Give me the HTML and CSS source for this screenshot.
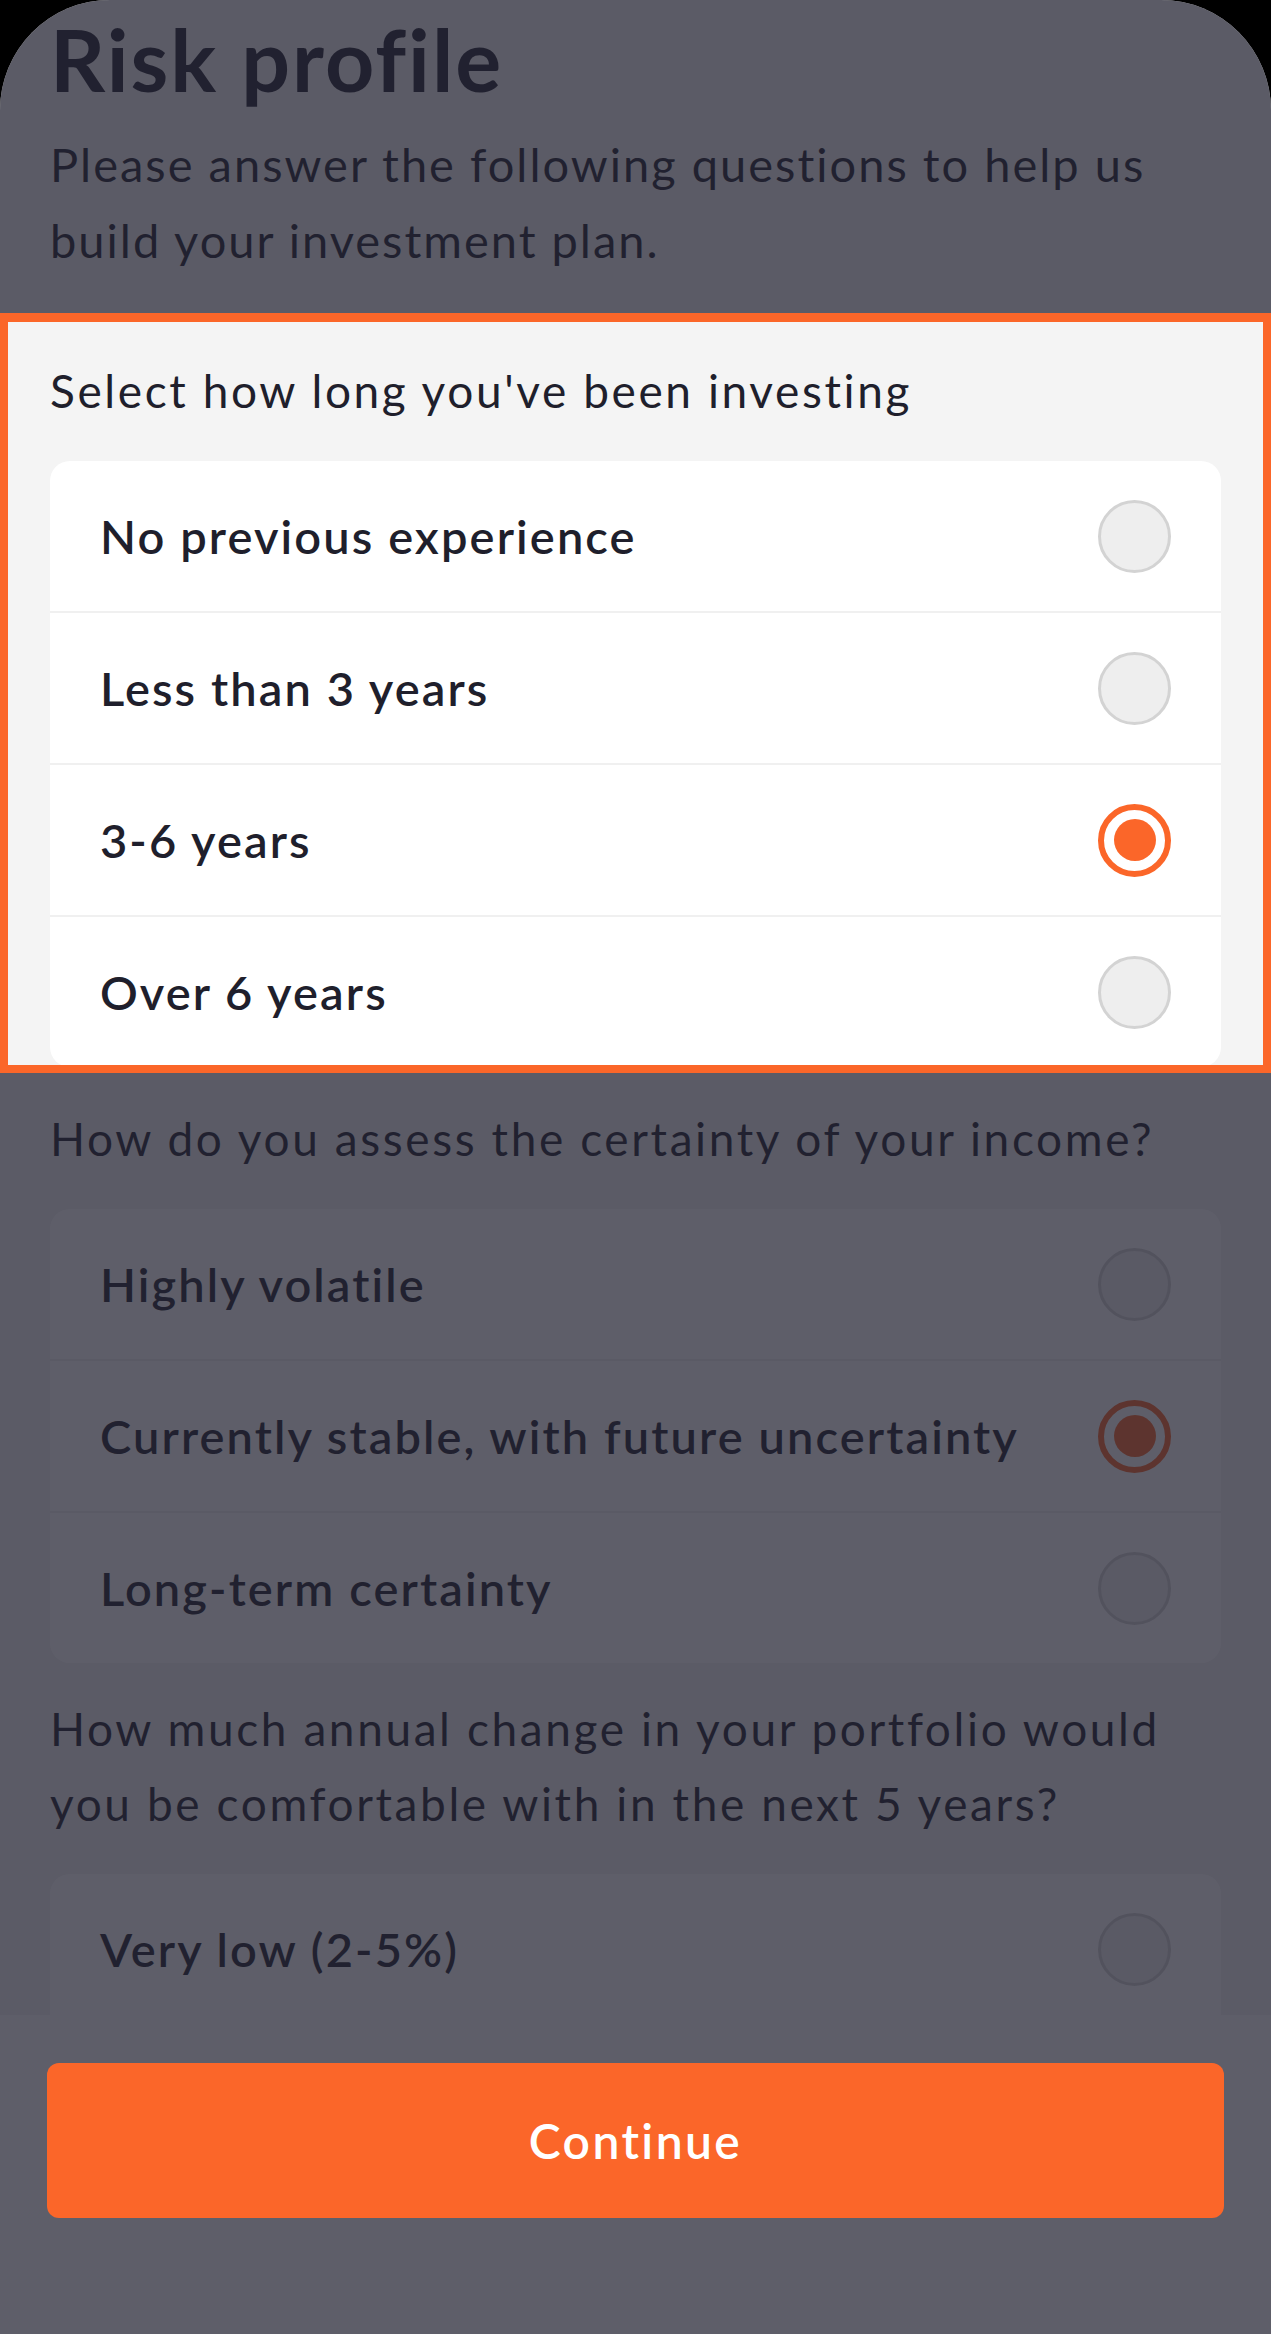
FILE: index.html
```html
<!DOCTYPE html>
<html lang="en">
<head>
    <meta charset="UTF-8">
    <meta name="viewport" content="width=device-width, initial-scale=1.0">
    <title>Risk profile</title>
    <link rel="stylesheet" href="styles.css">
</head>
<body>
    <div class="screen">
        <div class="content">
            <h1>Risk profile</h1>
            <p class="intro">Please answer the following questions to help us build your investment plan.</p>

            <div class="question highlight">
                <p class="question-label">Select how long you've been investing</p>
                <div class="options">
                    <div class="option">
                        <span>No previous experience</span>
                        <span class="radio"></span>
                    </div>
                    <div class="option">
                        <span>Less than 3 years</span>
                        <span class="radio"></span>
                    </div>
                    <div class="option">
                        <span>3-6 years</span>
                        <span class="radio checked"></span>
                    </div>
                    <div class="option">
                        <span>Over 6 years</span>
                        <span class="radio"></span>
                    </div>
                </div>
            </div>

            <div class="question">
                <p class="question-label">How do you assess the certainty of your income?</p>
                <div class="options">
                    <div class="option">
                        <span>Highly volatile</span>
                        <span class="radio"></span>
                    </div>
                    <div class="option">
                        <span>Currently stable, with future uncertainty</span>
                        <span class="radio checked"></span>
                    </div>
                    <div class="option">
                        <span>Long-term certainty</span>
                        <span class="radio"></span>
                    </div>
                </div>
            </div>

            <div class="question">
                <p class="question-label">How much annual change in your portfolio would you be comfortable with in the next 5 years?</p>
                <div class="options">
                    <div class="option">
                        <span>Very low (2-5%)</span>
                        <span class="radio"></span>
                    </div>
                    <div class="option">
                        <span>Low (5-10%)</span>
                        <span class="radio"></span>
                    </div>
                </div>
            </div>
        </div>

        <div class="footer">
            <button class="continue-btn">Continue</button>
        </div>

        <div class="overlay"></div>
    </div>
</body>
</html>
```

FILE: styles.css
```css
body {
    margin: 0;
    background: #000;
    font-family: Lato, "Open Sans", sans-serif;
    color: #1f1f2c;
}

.screen {
    position: relative;
    height: 2334px;
    overflow: hidden;
    background: #f4f4f4;
    border-radius: 110px 110px 0 0;
}

.content {
    padding: 12px 50px 0;
}

h1 {
    margin: 0;
    font-size: 86px;
    line-height: 94px;
    font-weight: 700;
    letter-spacing: 2px;
}

.intro {
    margin: 20px 0 0;
    font-size: 47px;
    line-height: 76px;
    letter-spacing: 2px;
}

.question {
    margin-top: 28px;
}

.question-label {
    margin: 0 0 33px;
    font-size: 46px;
    line-height: 75px;
    letter-spacing: 2.6px;
}

.highlight {
    position: relative;
    z-index: 2;
    box-sizing: border-box;
    height: 760px;
    margin: 35px -50px 0;
    padding: 31px 42px 0;
    overflow: hidden;
    background: #f4f4f4;
    border: 8px solid #fb6629;
    border-top-width: 9px;
}

.options {
    background: #fff;
    border-radius: 20px;
    overflow: hidden;
}

.option {
    display: flex;
    align-items: center;
    justify-content: space-between;
    height: 150px;
    padding: 0 50px;
    font-size: 47px;
    font-weight: 600;
    letter-spacing: 2.1px;
    border-bottom: 2px solid #f0f0f0;
}

.option:last-child {
    border-bottom: none;
}

.radio {
    box-sizing: border-box;
    flex-shrink: 0;
    width: 73px;
    height: 73px;
    border-radius: 50%;
    background: #eeeeee;
    border: 3px solid #d3d3d3;
}

.radio.checked {
    display: flex;
    align-items: center;
    justify-content: center;
    background: #fff;
    border: 6px solid #fb6629;
}

.radio.checked::after {
    content: "";
    width: 42px;
    height: 42px;
    border-radius: 50%;
    background: #fb6629;
}

.footer {
    position: absolute;
    left: 0;
    right: 0;
    bottom: 0;
    box-sizing: border-box;
    height: 319px;
    padding: 48px 47px 0;
    background: #fff;
}

.continue-btn {
    position: relative;
    z-index: 2;
    display: block;
    width: 100%;
    height: 155px;
    border: none;
    border-radius: 12px;
    background: #fb6629;
    color: #fff;
    font-family: Lato, "Open Sans", sans-serif;
    font-size: 48px;
    font-weight: 600;
    letter-spacing: 2.4px;
}

.overlay {
    position: absolute;
    inset: 0;
    z-index: 1;
    background: rgba(34, 34, 49, 0.73);
}
```
